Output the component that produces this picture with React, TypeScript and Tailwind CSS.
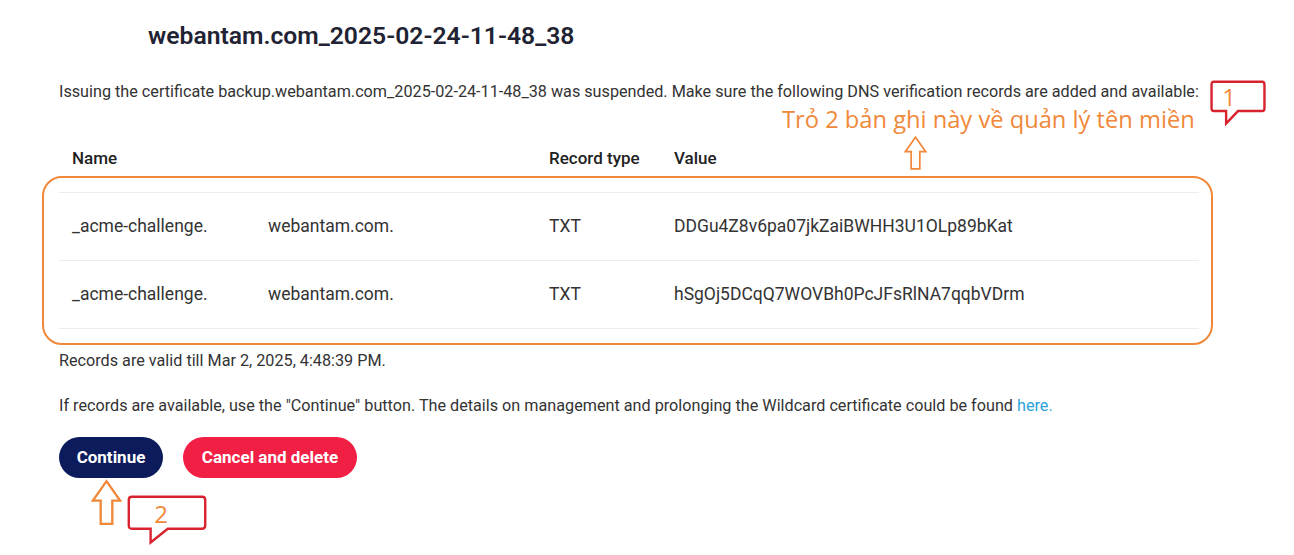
import React from "react";

const records = [
  { name: "_acme-challenge.", domain: "webantam.com.", type: "TXT", value: "DDGu4Z8v6pa07jkZaiBWHH3U1OLp89bKat" },
  { name: "_acme-challenge.", domain: "webantam.com.", type: "TXT", value: "hSgOj5DCqQ7WOVBh0PcJFsRlNA7qqbVDrm" },
];

// hollow orange "up" arrow used in the annotations
function UpArrow({ className }: { className?: string }) {
  return (
    <svg viewBox="0 0 32 48" className={className} fill="none">
      <path
        d="M16 2 L30 22 L22 22 L22 46 L10 46 L10 22 L2 22 Z"
        stroke="#f0883a"
        strokeWidth="2.4"
        strokeLinejoin="miter"
      />
    </svg>
  );
}

// red speech-bubble callout
function Callout({ className, tailX }: { className?: string; tailX: number }) {
  return (
    <div className={`absolute ${className}`}>
      <svg viewBox="0 0 100 60" preserveAspectRatio="none" className="absolute inset-0 h-full w-full overflow-visible">
        <path
          d={`M5 1 H95 Q99 1 99 5 V37 Q99 41 95 41 H${tailX + 22} L${tailX} 58 V41 H5 Q1 41 1 37 V5 Q1 1 5 1 Z`}
          stroke="#d8232f"
          strokeWidth="2.4"
          fill="white"
          vectorEffect="non-scaling-stroke"
        />
      </svg>
    </div>
  );
}

export default function App() {
  return (
    <div className="relative h-[555px] w-[1294px] overflow-hidden bg-white font-[Roboto,sans-serif] text-[#333]">
      <div className="pl-[59px] pt-[20px]">
        <h1 className="pl-[89px] text-[24.7px] leading-[32px] font-semibold text-[#1f2333]">
          webantam.com_2025-02-24-11-48_38
        </h1>

        <p className="mt-[30px] text-[16.2px] leading-[20px]">
          Issuing the certificate backup.webantam.com_2025-02-24-11-48_38 was suspended. Make sure the following DNS
          verification records are added and available:
        </p>

        {/* records table */}
        <div className="mt-[44px] w-[1140px]">
          <div className="grid grid-cols-[477px_125px_1fr] pb-[22px] text-[17px] leading-[24px] font-medium text-[#222]">
            <div className="px-[13px]">Name</div>
            <div className="px-[13px]">Record type</div>
            <div className="px-[13px]">Value</div>
          </div>

          <div className="relative">
            <div className="pointer-events-none absolute -top-[16px] -bottom-[16px] -left-[17px] -right-[14px] rounded-[20px] border-[2.5px] border-[#f0883a]" />
            {records.map((r, i) => (
              <div
                key={i}
                className={`grid h-[68px] grid-cols-[477px_125px_1fr] items-center border-t border-[#ececec] text-[17.5px] ${
                  i === records.length - 1 ? "h-[69px] border-b" : ""
                }`}
              >
                <div className="flex px-[13px] whitespace-nowrap">
                  <span className="w-[196px]">{r.name}</span>
                  <span>{r.domain}</span>
                </div>
                <div className="px-[13px]">{r.type}</div>
                <div className="px-[13px]">
                  <div className="w-[350px] overflow-hidden whitespace-nowrap">{r.value}</div>
                </div>
              </div>
            ))}
          </div>
        </div>

        <p className="mt-[22px] text-[16.2px] leading-[20px]">Records are valid till Mar 2, 2025, 4:48:39 PM.</p>
        <p className="mt-[25px] text-[16.2px] leading-[20px]">
          If records are available, use the "Continue" button. The details on management and prolonging the Wildcard
          certificate could be found <a className="text-[#2ba3dc]">here.</a>
        </p>

        <div className="mt-[21px] flex gap-[20px]">
          <button className="h-[41px] w-[104px] rounded-full bg-[#0b1b5c] text-[17px] font-bold text-white">
            Continue
          </button>
          <button className="h-[41px] w-[174px] rounded-full bg-[#f21f45] text-[17px] font-bold text-white">
            Cancel and delete
          </button>
        </div>
      </div>

      {/* annotations */}
      <div className="absolute left-[782px] top-[103px] font-['Open_Sans',sans-serif] text-[23.7px] leading-[32px] text-[#f0883a]">
        Trỏ 2 bản ghi này về quản lý tên miền
      </div>
      <UpArrow className="absolute left-[904px] top-[132px] h-[42px] w-[23px]" />
      <UpArrow className="absolute left-[91px] top-[478px] h-[49px] w-[31px]" />

      <Callout className="left-[1211px] top-[81px] h-[44px] w-[54px]" tailX={28} />
      <div className="absolute left-[1211px] top-[81px] flex h-[31px] w-[36px] items-center justify-center font-['Open_Sans',sans-serif] text-[24px] text-[#f0883a]">
        1
      </div>

      <Callout className="left-[128px] top-[496px] h-[48px] w-[78px]" tailX={29} />
      <div className="absolute left-[128px] top-[496px] flex h-[35px] w-[66px] items-center justify-center font-['Open_Sans',sans-serif] text-[24px] text-[#f0883a]">
        2
      </div>
    </div>
  );
}
